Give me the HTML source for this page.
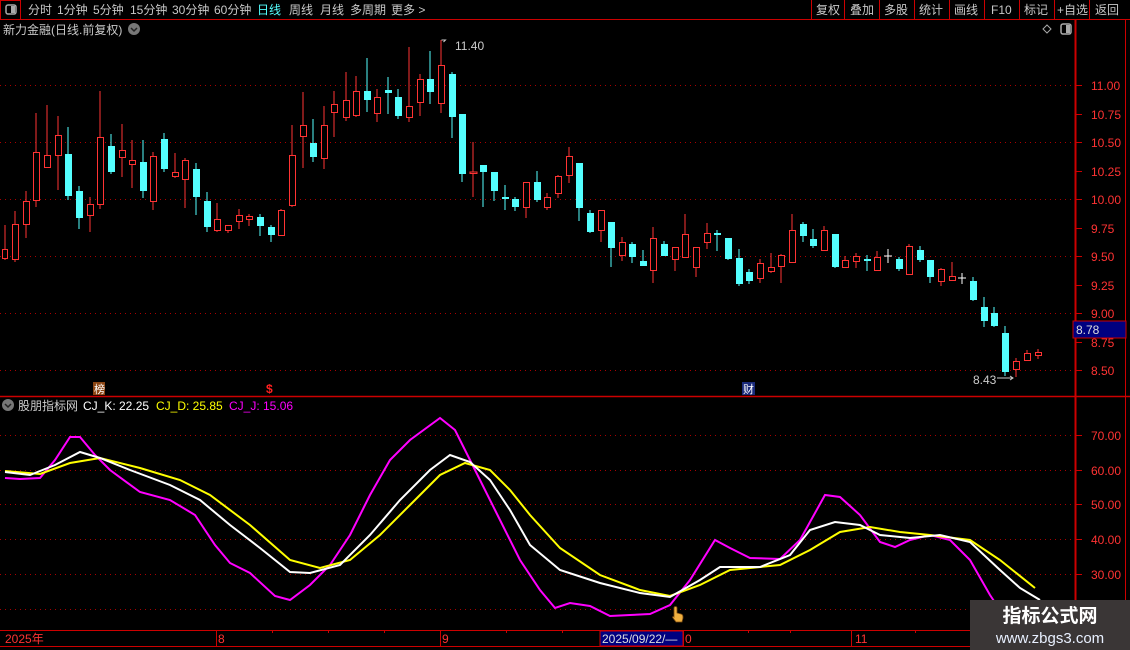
<!DOCTYPE html>
<html><head><meta charset="utf-8"><style>
html,body{margin:0;padding:0;background:#000;width:1130px;height:650px;overflow:hidden}
svg{display:block;font-family:"Liberation Sans","Noto Sans CJK SC",sans-serif}
.r line{stroke:#ff3333;stroke-width:1}
.r rect{fill:#000;stroke:#ff3333;stroke-width:1}
.c line{stroke:#54ffff;stroke-width:1}
.c rect{fill:#54ffff}
.tb{fill:#c8c8c8;font-size:12px}
.ax{fill:#ff3333;font-size:12px}
</style></head><body>
<svg width="1130" height="650" viewBox="0 0 1130 650">
<rect x="0.5" y="0.5" width="20" height="19" fill="none" stroke="#c00"/>
<rect x="6" y="5" width="10" height="9" rx="2" fill="none" stroke="#aaa" stroke-width="1.5"/>
<rect x="11" y="6" width="4" height="7" fill="#aaa"/>
<line x1="0" y1="19.5" x2="1130" y2="19.5" stroke="#c00"/>
<g class="tb">
<text x="28" y="14">分时</text><text x="57" y="14">1分钟</text><text x="93" y="14">5分钟</text><text x="130" y="14">15分钟</text><text x="172" y="14">30分钟</text><text x="214" y="14">60分钟</text>
<text x="257" y="14" fill="#54ffff">日线</text><text x="289" y="14">周线</text><text x="320" y="14">月线</text><text x="350" y="14">多周期</text><text x="391" y="14">更多 &gt;</text>
<text x="816" y="14">复权</text><text x="850" y="14">叠加</text><text x="884" y="14">多股</text><text x="919" y="14">统计</text><text x="954" y="14">画线</text><text x="991" y="14">F10</text><text x="1024" y="14">标记</text><text x="1057" y="14">+自选</text><text x="1095" y="14">返回</text>
</g>
<g stroke="#c00">
<line x1="811.5" y1="0" x2="811.5" y2="19"/><line x1="844.5" y1="0" x2="844.5" y2="19"/><line x1="879.5" y1="0" x2="879.5" y2="19"/><line x1="914.5" y1="0" x2="914.5" y2="19"/><line x1="949.5" y1="0" x2="949.5" y2="19"/><line x1="984.5" y1="0" x2="984.5" y2="19"/><line x1="1019.5" y1="0" x2="1019.5" y2="19"/><line x1="1054.5" y1="0" x2="1054.5" y2="19"/><line x1="1089.5" y1="0" x2="1089.5" y2="19"/>
</g>
<text x="3" y="34" class="tb">新力金融(日线.前复权)</text>
<circle cx="134" cy="29" r="6" fill="#777"/><path d="M131 28l3 3 3-3" stroke="#222" stroke-width="1.5" fill="none"/>
<path d="M1047 25l4 4-4 4-4-4z" fill="none" stroke="#aaa"/>
<rect x="1061" y="24" width="10" height="10" rx="2" fill="none" stroke="#aaa" stroke-width="1.5"/><rect x="1066" y="25" width="4" height="8" fill="#aaa"/>
<line x1="1075.5" y1="20" x2="1075.5" y2="646" stroke="#c00" stroke-width="2"/>
<line x1="1125.5" y1="20" x2="1125.5" y2="646" stroke="#c00"/>
<line x1="0" y1="396.5" x2="1130" y2="396.5" stroke="#c00" stroke-width="1.5"/>
<line x1="0" y1="630.5" x2="1076" y2="630.5" stroke="#c00"/>
<line x1="0" y1="646.5" x2="1130" y2="646.5" stroke="#c00"/>
<g stroke="#a00" stroke-dasharray="1,4">
<line x1="0" y1="85.5" x2="1075" y2="85.5"/><line x1="0" y1="142.5" x2="1075" y2="142.5"/><line x1="0" y1="199.5" x2="1075" y2="199.5"/><line x1="0" y1="256.5" x2="1075" y2="256.5"/><line x1="0" y1="313.5" x2="1075" y2="313.5"/><line x1="0" y1="370.5" x2="1075" y2="370.5"/>
<line x1="0" y1="435.5" x2="1075" y2="435.5"/><line x1="0" y1="470.5" x2="1075" y2="470.5"/><line x1="0" y1="504.5" x2="1075" y2="504.5"/><line x1="0" y1="539.5" x2="1075" y2="539.5"/><line x1="0" y1="574.5" x2="1075" y2="574.5"/><line x1="0" y1="609.5" x2="1075" y2="609.5"/>
</g>
<g stroke="#c00">
<line x1="1076" y1="85.5" x2="1082" y2="85.5"/><line x1="1076" y1="114.5" x2="1082" y2="114.5"/><line x1="1076" y1="142.5" x2="1082" y2="142.5"/><line x1="1076" y1="171.5" x2="1082" y2="171.5"/><line x1="1076" y1="199.5" x2="1082" y2="199.5"/><line x1="1076" y1="228.5" x2="1082" y2="228.5"/><line x1="1076" y1="256.5" x2="1082" y2="256.5"/><line x1="1076" y1="285.5" x2="1082" y2="285.5"/><line x1="1076" y1="313.5" x2="1082" y2="313.5"/><line x1="1076" y1="342.5" x2="1082" y2="342.5"/><line x1="1076" y1="370.5" x2="1082" y2="370.5"/>
<line x1="1076" y1="435.5" x2="1082" y2="435.5"/><line x1="1076" y1="470.5" x2="1082" y2="470.5"/><line x1="1076" y1="504.5" x2="1082" y2="504.5"/><line x1="1076" y1="539.5" x2="1082" y2="539.5"/><line x1="1076" y1="574.5" x2="1082" y2="574.5"/>
</g>
<g class="ax">
<text x="1091" y="90">11.00</text><text x="1091" y="119">10.75</text><text x="1091" y="147">10.50</text><text x="1091" y="176">10.25</text><text x="1091" y="204">10.00</text><text x="1091" y="233">9.75</text><text x="1091" y="261">9.50</text><text x="1091" y="290">9.25</text><text x="1091" y="318">9.00</text><text x="1091" y="347">8.75</text><text x="1091" y="375">8.50</text>
<text x="1091" y="440">70.00</text><text x="1091" y="475">60.00</text><text x="1091" y="509">50.00</text><text x="1091" y="544">40.00</text><text x="1091" y="579">30.00</text>
</g>
<rect x="1073" y="321" width="53" height="17" fill="#000080" stroke="#c00"/>
<text x="1076" y="334" fill="#ddd" font-size="12">8.78</text>
<g class="r">
<line x1="5" y1="225" x2="5" y2="260"/><rect x="2.5" y="249.5" width="5" height="9"/>
<line x1="15" y1="211" x2="15" y2="262"/><rect x="12.5" y="224.5" width="6" height="35"/>
<line x1="26" y1="191" x2="26" y2="238"/><rect x="23.5" y="201.5" width="6" height="23"/>
<line x1="36" y1="113" x2="36" y2="207"/><rect x="33.5" y="152.5" width="6" height="48"/>
<line x1="47" y1="105" x2="47" y2="168"/><rect x="44.5" y="155.5" width="6" height="12"/>
<line x1="58" y1="116" x2="58" y2="190"/><rect x="55.5" y="135.5" width="6" height="20"/>
<line x1="90" y1="197" x2="90" y2="232"/><rect x="87.5" y="204.5" width="6" height="11"/>
<line x1="100" y1="91" x2="100" y2="209"/><rect x="97.5" y="137.5" width="6" height="67"/>
<line x1="122" y1="124" x2="122" y2="177"/><rect x="119.5" y="150.5" width="6" height="7"/>
<line x1="132" y1="140" x2="132" y2="188"/><rect x="129.5" y="160.5" width="6" height="4"/>
<line x1="153" y1="152" x2="153" y2="210"/><rect x="150.5" y="156.5" width="6" height="45"/>
<line x1="175" y1="153" x2="175" y2="178"/><rect x="172.5" y="172.5" width="6" height="4"/>
<line x1="185" y1="158" x2="185" y2="208"/><rect x="182.5" y="160.5" width="6" height="19"/>
<line x1="217" y1="203" x2="217" y2="232"/><rect x="214.5" y="219.5" width="6" height="11"/>
<line x1="228" y1="225" x2="228" y2="233"/><rect x="225.5" y="225.5" width="6" height="5"/>
<line x1="239" y1="209" x2="239" y2="229"/><rect x="236.5" y="215.5" width="6" height="6"/>
<line x1="249" y1="214" x2="249" y2="226"/><rect x="246.5" y="216.5" width="6" height="3"/>
<line x1="281" y1="209" x2="281" y2="236"/><rect x="278.5" y="210.5" width="6" height="25"/>
<line x1="292" y1="125" x2="292" y2="207"/><rect x="289.5" y="155.5" width="6" height="50"/>
<line x1="303" y1="92" x2="303" y2="168"/><rect x="300.5" y="125.5" width="6" height="11"/>
<line x1="324" y1="106" x2="324" y2="169"/><rect x="321.5" y="125.5" width="6" height="33"/>
<line x1="334" y1="91" x2="334" y2="137"/><rect x="331.5" y="104.5" width="6" height="8"/>
<line x1="346" y1="72" x2="346" y2="121"/><rect x="343.5" y="100.5" width="6" height="17"/>
<line x1="356" y1="76" x2="356" y2="117"/><rect x="353.5" y="91.5" width="6" height="24"/>
<line x1="377" y1="89" x2="377" y2="122"/><rect x="374.5" y="97.5" width="6" height="16"/>
<line x1="409" y1="47" x2="409" y2="122"/><rect x="406.5" y="106.5" width="6" height="11"/>
<line x1="420" y1="74" x2="420" y2="116"/><rect x="417.5" y="79.5" width="6" height="23"/>
<line x1="441" y1="40" x2="441" y2="113"/><rect x="438.5" y="65.5" width="6" height="38"/>
<line x1="473" y1="142" x2="473" y2="197"/><rect x="470" y="172" width="7" height="1.5" fill="#ff3333"/>
<line x1="526" y1="182" x2="526" y2="218"/><rect x="523.5" y="182.5" width="6" height="25"/>
<line x1="547" y1="193" x2="547" y2="210"/><rect x="544.5" y="197.5" width="6" height="10"/>
<line x1="558" y1="175" x2="558" y2="198"/><rect x="555.5" y="176.5" width="6" height="17"/>
<line x1="569" y1="147" x2="569" y2="183"/><rect x="566.5" y="156.5" width="6" height="19"/>
<line x1="601" y1="210" x2="601" y2="242"/><rect x="598.5" y="210.5" width="6" height="20"/>
<line x1="622" y1="237" x2="622" y2="261"/><rect x="619.5" y="242.5" width="6" height="13"/>
<line x1="653" y1="227" x2="653" y2="283"/><rect x="650.5" y="238.5" width="6" height="32"/>
<line x1="675" y1="247" x2="675" y2="271"/><rect x="672.5" y="247.5" width="6" height="12"/>
<line x1="685" y1="214" x2="685" y2="258"/><rect x="682.5" y="234.5" width="6" height="23"/>
<line x1="696" y1="247" x2="696" y2="277"/><rect x="693.5" y="247.5" width="6" height="20"/>
<line x1="707" y1="223" x2="707" y2="249"/><rect x="704.5" y="233.5" width="6" height="9"/>
<line x1="760" y1="259" x2="760" y2="283"/><rect x="757.5" y="263.5" width="6" height="15"/>
<line x1="771" y1="253" x2="771" y2="273"/><rect x="768.5" y="267.5" width="6" height="4"/>
<line x1="781" y1="254" x2="781" y2="283"/><rect x="778.5" y="255.5" width="6" height="11"/>
<line x1="792" y1="214" x2="792" y2="263"/><rect x="789.5" y="230.5" width="6" height="32"/>
<line x1="824" y1="226" x2="824" y2="250"/><rect x="821.5" y="230.5" width="6" height="20"/>
<line x1="845" y1="256" x2="845" y2="267"/><rect x="842.5" y="260.5" width="6" height="7"/>
<line x1="856" y1="253" x2="856" y2="268"/><rect x="853.5" y="256.5" width="6" height="5"/>
<line x1="877" y1="251" x2="877" y2="271"/><rect x="874.5" y="257.5" width="6" height="13"/>
<line x1="909" y1="244" x2="909" y2="274"/><rect x="906.5" y="246.5" width="6" height="28"/>
<line x1="941" y1="268" x2="941" y2="286"/><rect x="938.5" y="269.5" width="6" height="12"/>
<line x1="952" y1="262" x2="952" y2="281"/><rect x="949.5" y="276.5" width="6" height="4"/>
<line x1="1016" y1="358" x2="1016" y2="377"/><rect x="1013.5" y="361.5" width="6" height="8"/>
<line x1="1027" y1="350" x2="1027" y2="360"/><rect x="1024.5" y="353.5" width="6" height="7"/>
<line x1="1038" y1="349" x2="1038" y2="359"/><rect x="1035.5" y="352.5" width="6" height="3"/>
</g>
<g class="c">
<line x1="68" y1="127" x2="68" y2="200"/><rect x="65" y="154" width="7" height="42"/>
<line x1="79" y1="186" x2="79" y2="229"/><rect x="76" y="191" width="7" height="27"/>
<line x1="111" y1="134" x2="111" y2="174"/><rect x="108" y="146" width="7" height="26"/>
<line x1="143" y1="140" x2="143" y2="198"/><rect x="140" y="162" width="7" height="29"/>
<line x1="164" y1="133" x2="164" y2="172"/><rect x="161" y="139" width="7" height="30"/>
<line x1="196" y1="163" x2="196" y2="215"/><rect x="193" y="169" width="7" height="28"/>
<line x1="207" y1="192" x2="207" y2="232"/><rect x="204" y="201" width="7" height="26"/>
<line x1="260" y1="214" x2="260" y2="236"/><rect x="257" y="217" width="7" height="9"/>
<line x1="271" y1="225" x2="271" y2="242"/><rect x="268" y="227" width="7" height="8"/>
<line x1="313" y1="119" x2="313" y2="162"/><rect x="310" y="143" width="7" height="14"/>
<line x1="367" y1="58" x2="367" y2="112"/><rect x="364" y="91" width="7" height="9"/>
<line x1="388" y1="77" x2="388" y2="114"/><rect x="385" y="90" width="7" height="3"/>
<line x1="398" y1="89" x2="398" y2="119"/><rect x="395" y="97" width="7" height="19"/>
<line x1="430" y1="51" x2="430" y2="104"/><rect x="427" y="79" width="7" height="13"/>
<line x1="452" y1="72" x2="452" y2="138"/><rect x="449" y="74" width="7" height="43"/>
<line x1="462" y1="114" x2="462" y2="182"/><rect x="459" y="114" width="7" height="60"/>
<line x1="483" y1="165" x2="483" y2="207"/><rect x="480" y="165" width="7" height="7"/>
<line x1="494" y1="172" x2="494" y2="201"/><rect x="491" y="172" width="7" height="19"/>
<line x1="505" y1="185" x2="505" y2="210"/><rect x="502" y="197" width="7" height="2"/>
<line x1="515" y1="197" x2="515" y2="211"/><rect x="512" y="199" width="7" height="8"/>
<line x1="537" y1="171" x2="537" y2="202"/><rect x="534" y="182" width="7" height="18"/>
<line x1="579" y1="163" x2="579" y2="221"/><rect x="576" y="163" width="7" height="45"/>
<line x1="590" y1="210" x2="590" y2="233"/><rect x="587" y="213" width="7" height="19"/>
<line x1="611" y1="222" x2="611" y2="267"/><rect x="608" y="222" width="7" height="26"/>
<line x1="632" y1="242" x2="632" y2="263"/><rect x="629" y="244" width="7" height="13"/>
<line x1="643" y1="250" x2="643" y2="266"/><rect x="640" y="261" width="7" height="5"/>
<line x1="664" y1="241" x2="664" y2="256"/><rect x="661" y="244" width="7" height="12"/>
<line x1="717" y1="230" x2="717" y2="251"/><rect x="714" y="233" width="7" height="2"/>
<line x1="728" y1="238" x2="728" y2="260"/><rect x="725" y="238" width="7" height="21"/>
<line x1="739" y1="249" x2="739" y2="286"/><rect x="736" y="258" width="7" height="26"/>
<line x1="749" y1="269" x2="749" y2="284"/><rect x="746" y="272" width="7" height="9"/>
<line x1="803" y1="222" x2="803" y2="242"/><rect x="800" y="224" width="7" height="12"/>
<line x1="813" y1="229" x2="813" y2="248"/><rect x="810" y="239" width="7" height="7"/>
<line x1="835" y1="234" x2="835" y2="268"/><rect x="832" y="234" width="7" height="33"/>
<line x1="867" y1="255" x2="867" y2="271"/><rect x="864" y="259" width="7" height="2"/>
<line x1="899" y1="257" x2="899" y2="271"/><rect x="896" y="259" width="7" height="10"/>
<line x1="920" y1="246" x2="920" y2="262"/><rect x="917" y="250" width="7" height="10"/>
<line x1="930" y1="260" x2="930" y2="283"/><rect x="927" y="260" width="7" height="17"/>
<line x1="973" y1="277" x2="973" y2="301"/><rect x="970" y="281" width="7" height="19"/>
<line x1="984" y1="297" x2="984" y2="327"/><rect x="981" y="307" width="7" height="14"/>
<line x1="994" y1="307" x2="994" y2="327"/><rect x="991" y="313" width="7" height="13"/>
<line x1="1005" y1="326" x2="1005" y2="376"/><rect x="1002" y="333" width="7" height="39"/>
</g>
<g stroke="#fff">
<line x1="888" y1="249" x2="888" y2="263"/><line x1="884" y1="256" x2="892" y2="256"/>
<line x1="962" y1="273" x2="962" y2="284"/><line x1="958" y1="278" x2="966" y2="278"/>
</g>
<path d="M441.5 40h4l-2 2" stroke="#ccc" fill="none"/>
<text x="455" y="50" fill="#ccc" font-size="12">11.40</text>
<text x="973" y="384" fill="#ccc" font-size="12">8.43</text>
<path d="M997 378h16m-3-2l3 2-3 2" stroke="#ccc" fill="none"/>
<rect x="93" y="382" width="12" height="13" fill="#8b4513"/><text x="94" y="393" fill="#fff" font-size="11">榜</text>
<text x="266" y="393" fill="#ff2020" font-size="12" font-weight="bold">$</text>
<rect x="742" y="382" width="13" height="13" fill="#1a2a7a"/><text x="743" y="393" fill="#fff" font-size="11">财</text>
<circle cx="8" cy="405" r="6" fill="#777"/><path d="M5 404l3 3 3-3" stroke="#222" stroke-width="1.5" fill="none"/>
<text x="18" y="410" font-size="12" fill="#ccc">股朋指标网</text>
<text x="83" y="410" font-size="12" fill="#fff">CJ_K: 22.25</text>
<text x="156" y="410" font-size="12" fill="#ffff00">CJ_D: 25.85</text>
<text x="229" y="410" font-size="12" fill="#ff00ff">CJ_J: 15.06</text>
<polyline fill="none" stroke="#ff00ff" stroke-width="2" points="5,478 20,479 40,478 55,460 70,437 80,437 95,455 110,470 140,492 170,500 195,515 215,545 230,563 250,573 275,596 290,600 310,585 330,565 350,535 370,495 390,460 410,440 440,418 455,430 475,470 495,510 520,560 540,590 555,608 570,603 590,606 610,616 630,615 650,614 670,605 690,580 715,540 730,548 750,558 780,559 800,540 825,495 840,497 860,515 880,542 895,547 910,540 930,535 950,540 970,560 990,595 1000,610"/>
<polyline fill="none" stroke="#ffff00" stroke-width="2" points="5,471 40,474 70,463 100,458 140,468 180,480 210,495 250,525 290,560 320,568 350,560 380,535 410,505 440,475 465,463 490,470 510,490 530,515 560,548 600,575 640,590 670,596 700,585 730,570 780,565 810,550 840,532 870,527 900,532 930,535 970,540 1000,560 1035,588"/>
<polyline fill="none" stroke="#ffffff" stroke-width="2" points="5,472 30,475 55,465 80,452 100,458 130,470 170,485 200,500 230,525 260,548 290,572 310,573 340,565 370,535 400,500 430,470 450,455 470,462 490,480 510,510 530,545 560,570 600,583 640,593 670,597 700,580 720,567 760,567 790,555 810,530 835,522 860,525 880,535 910,538 940,535 970,542 1000,570 1020,588 1040,600"/>
<path d="M674 614v-6a1.5 1.5 0 0 1 3 0v5l4 1c2 0.5 2 2 2 4l-1 4h-6l-3-4c-1-1 0-2 1-1z" fill="#f0b040" stroke="#7a4a10" stroke-width="0.8"/>
<g stroke="#c00">
<line x1="216.5" y1="630" x2="216.5" y2="646"/><line x1="440.5" y1="630" x2="440.5" y2="646"/><line x1="683.5" y1="630" x2="683.5" y2="646"/><line x1="851.5" y1="630" x2="851.5" y2="646"/>
<line x1="272.5" y1="630" x2="272.5" y2="633"/><line x1="328.5" y1="630" x2="328.5" y2="633"/><line x1="384.5" y1="630" x2="384.5" y2="633"/><line x1="506.5" y1="630" x2="506.5" y2="633"/><line x1="562.5" y1="630" x2="562.5" y2="633"/><line x1="748.5" y1="630" x2="748.5" y2="633"/><line x1="790.5" y1="630" x2="790.5" y2="633"/><line x1="915.5" y1="630" x2="915.5" y2="633"/>
</g>
<text x="5" y="643" class="ax">2025年</text>
<text x="218" y="643" class="ax">8</text>
<text x="442" y="643" class="ax">9</text>
<rect x="600" y="631" width="83" height="15" fill="#000080" stroke="#c00"/>
<text x="602" y="643" fill="#ddd" font-size="12">2025/09/22/—</text>
<text x="685" y="643" class="ax">0</text>
<text x="855" y="643" class="ax">11</text>
<rect x="970" y="600" width="160" height="50" fill="#3a3636"/>
<text x="1050" y="622" text-anchor="middle" fill="#fff" font-size="19" font-weight="bold">指标公式网</text>
<text x="1050" y="643" text-anchor="middle" fill="#e8f0ff" font-size="15">www.zbgs3.com</text>
</svg>
</body></html>
